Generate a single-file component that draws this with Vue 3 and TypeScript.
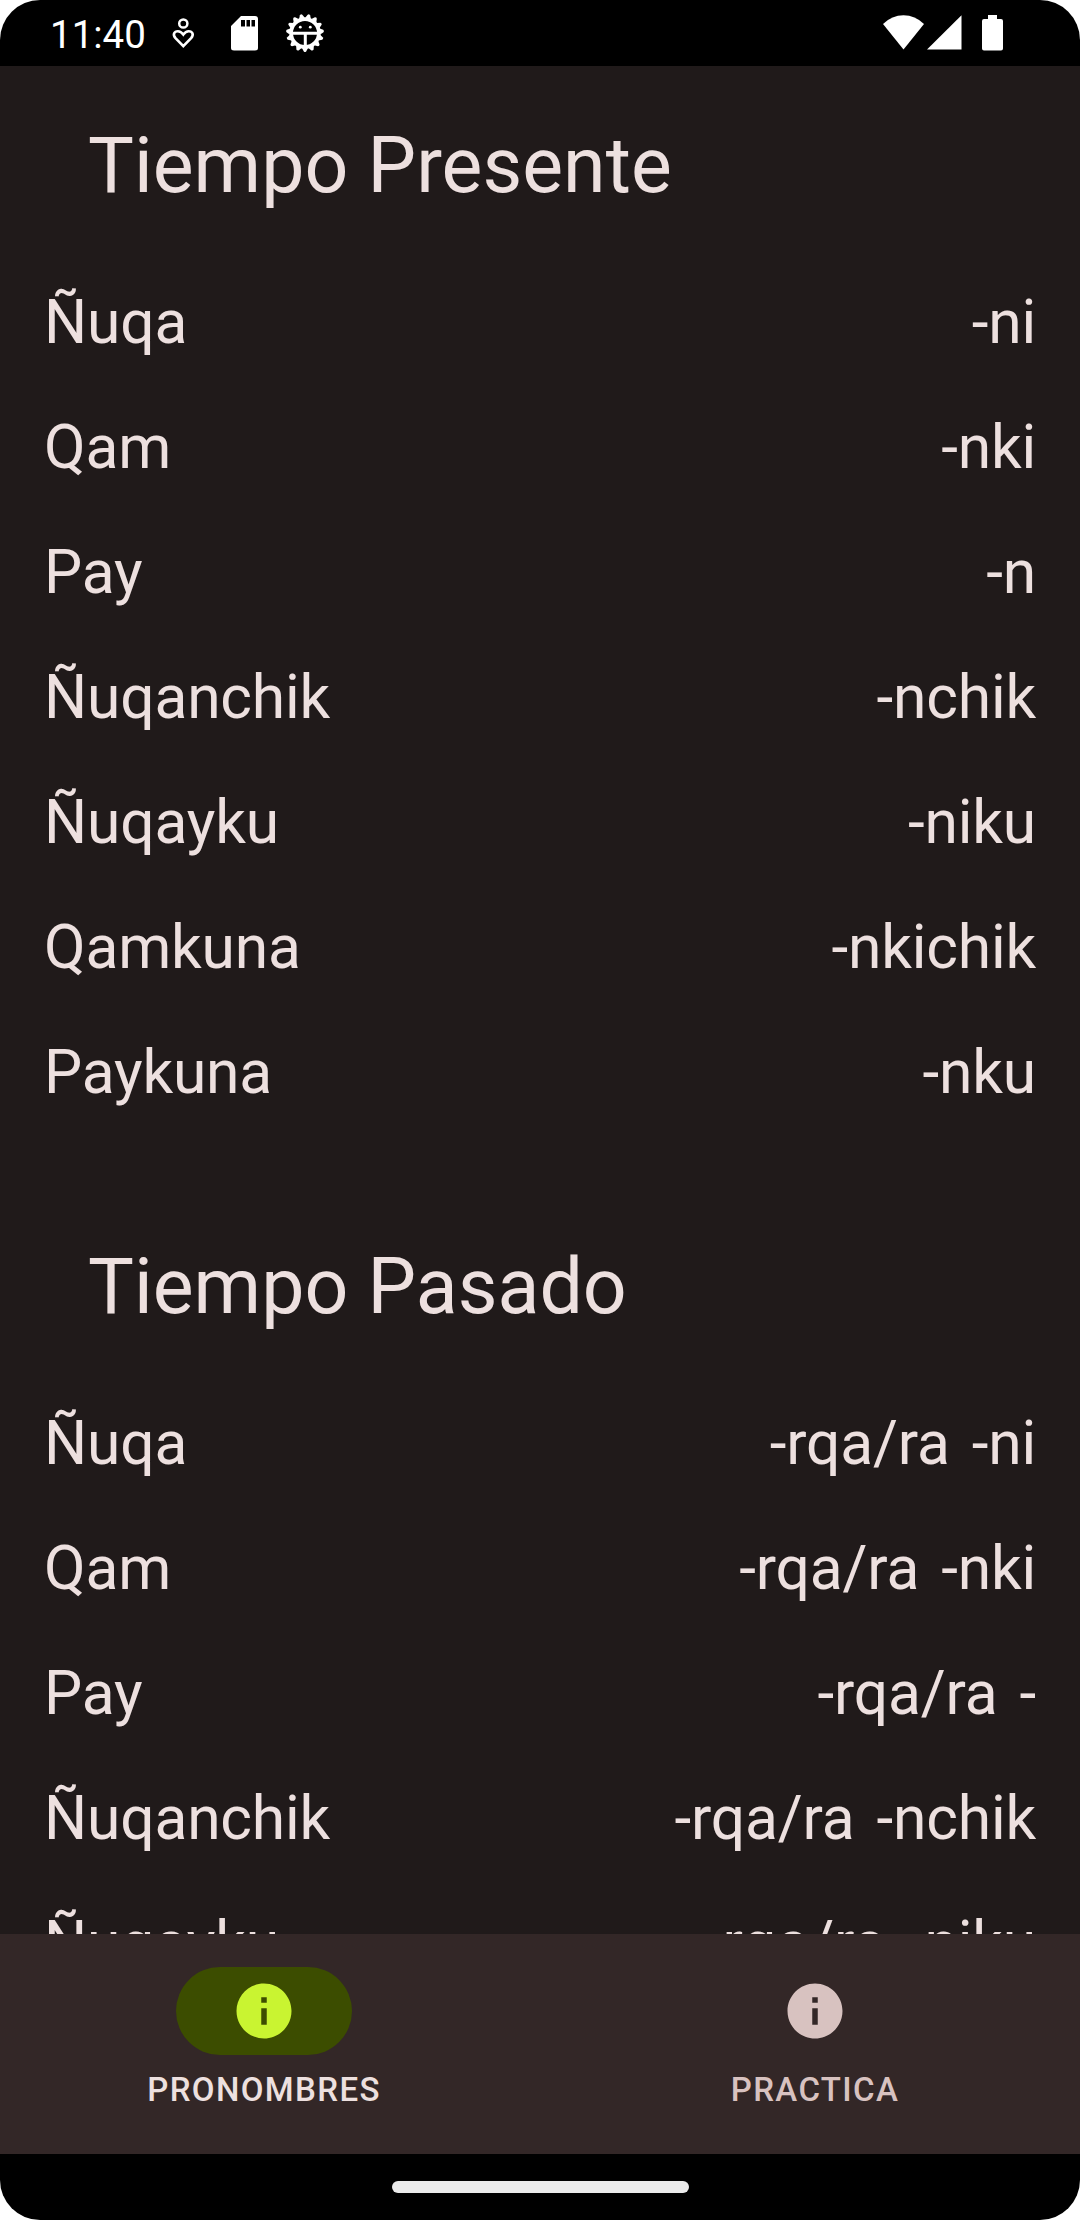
<script setup lang="ts">
interface Row {
  pronoun: string
  suffixes: string[]
}

interface Section {
  title: string
  rows: Row[]
}

const sections: Section[] = [
  {
    title: 'Tiempo Presente',
    rows: [
      { pronoun: 'Ñuqa', suffixes: ['-ni'] },
      { pronoun: 'Qam', suffixes: ['-nki'] },
      { pronoun: 'Pay', suffixes: ['-n'] },
      { pronoun: 'Ñuqanchik', suffixes: ['-nchik'] },
      { pronoun: 'Ñuqayku', suffixes: ['-niku'] },
      { pronoun: 'Qamkuna', suffixes: ['-nkichik'] },
      { pronoun: 'Paykuna', suffixes: ['-nku'] },
    ],
  },
  {
    title: 'Tiempo Pasado',
    rows: [
      { pronoun: 'Ñuqa', suffixes: ['-rqa/ra', '-ni'] },
      { pronoun: 'Qam', suffixes: ['-rqa/ra', '-nki'] },
      { pronoun: 'Pay', suffixes: ['-rqa/ra', '-'] },
      { pronoun: 'Ñuqanchik', suffixes: ['-rqa/ra', '-nchik'] },
      { pronoun: 'Ñuqayku', suffixes: ['-rqa/ra', '-niku'] },
    ],
  },
]

const tabs = [
  { label: 'PRONOMBRES', active: true },
  { label: 'PRACTICA', active: false },
]

const teeth = Array.from({ length: 15 }, (_, i) => i * 24 + 12)
</script>

<template>
  <div class="screen">
    <header class="status">
      <span class="time">11:40</span>
      <svg class="heart" width="24" height="36" viewBox="0 0 24 36" fill="none" stroke="#fff">
        <circle cx="12.3" cy="8.5" r="4.1" stroke-width="2.5" />
        <path d="M12.300 31.200L4.500 23.200C1.300 19.600 3.300 16.200 6.900 16.200C9.300 16.200 10.900 17.600 12.300 19.600C13.700 17.600 15.300 16.200 17.700 16.200C21.300 16.200 23.300 19.600 20.100 23.200Z" stroke-width="2.600" />
      </svg>
      <svg class="card" width="27" height="35" viewBox="0 0 27 35">
        <path fill="#fff" fill-rule="evenodd" d="M10 0H24Q27 0 27 3V32Q27 34.5 24 34.5H3Q0 34.5 0 32V10ZM10 4V10.500H14V4ZM15.500 4V10.500H19V4ZM20.500 4V10.500H24V4Z" />
      </svg>
      <svg class="bug" width="40" height="40" viewBox="-20 -20 40 40">
        <circle r="13.900" fill="none" stroke="#fff" stroke-width="3.700" />
        <path v-for="a in teeth" :key="a" :transform="`rotate(${a})`" d="M-3 -15L-1.200 -18.500Q0 -19.600 1.200 -18.500L3 -15Z" fill="#fff" />
        <path d="M-13 0.300H13M0.300 0V14" stroke="#fff" stroke-width="3" fill="none" />
        <circle cx="-4.700" cy="-5.800" r="1.400" fill="#fff" />
        <circle cx="5.300" cy="-5.800" r="1.400" fill="#fff" />
      </svg>
      <span class="spacer"></span>
      <svg class="wifi" width="41" height="35" viewBox="0 0 41 35">
        <path d="M0 9Q9 0.300 20.500 0.300T41 9L20.500 34.500Z" fill="#fff" />
      </svg>
      <svg class="signal" width="35" height="35" viewBox="0 0 35 35">
        <path d="M0 34.600L34.500 0.300V34.600Z" fill="#fff" />
      </svg>
      <svg class="battery" width="21" height="36" viewBox="0 0 21 36">
        <path d="M6 0H15V4H19Q21 4 21 6V33.500Q21 35.500 19 35.500H2Q0 35.500 0 33.500V6Q0 4 2 4H6Z" fill="#fff" />
      </svg>
    </header>

    <main class="content">
      <section v-for="section in sections" :key="section.title" class="section">
        <h1 class="title">{{ section.title }}</h1>
        <div v-for="row in section.rows" :key="row.pronoun" class="row">
          <span>{{ row.pronoun }}</span>
          <div class="suffixes">
            <span v-for="suffix in row.suffixes" :key="suffix">{{ suffix }}</span>
          </div>
        </div>
      </section>
    </main>

    <nav class="tabs">
      <div v-for="tab in tabs" :key="tab.label" class="tab" :class="{ active: tab.active }">
        <div class="pill">
          <svg width="66" height="66" viewBox="0 0 24 24" fill="currentColor">
            <path d="M12 2C6.480 2 2 6.480 2 12s4.480 10 10 10 10-4.480 10-10S17.520 2 12 2zm1 15h-2v-6h2v6zm0-8h-2V7h2v2z" />
          </svg>
        </div>
        <span class="label">{{ tab.label }}</span>
      </div>
    </nav>

    <footer class="gesture"><div class="handle"></div></footer>
  </div>
</template>

<style>
body {
  margin: 0;
  background: #fff;
}
</style>

<style scoped>
.screen {
  display: flex;
  flex-direction: column;
  width: 1080px;
  height: 2220px;
  overflow: hidden;
  border-radius: 40px;
  background: #000;
  color: #ede0df;
  font-family: Roboto, sans-serif;
}

.status {
  display: flex;
  flex: none;
  align-items: flex-start;
  box-sizing: border-box;
  height: 66px;
  padding: 0 77px 0 50px;
  color: #fff;
}

.status svg {
  display: block;
  flex: none;
}

.time {
  width: 121px;
  padding-top: 12px;
  font-size: 38.5px;
  line-height: 45px;
}

.heart {
  margin-top: 15px;
}

.card {
  margin: 16px 0 0 36px;
}

.bug {
  margin: 13px 0 0 27px;
}

.spacer {
  flex: 1;
}

.wifi {
  margin-top: 15px;
}

.signal {
  margin: 15px 0 0 3px;
}

.battery {
  margin: 15px 0 0 20px;
}

.content {
  flex: 1;
  min-height: 0;
  overflow: hidden;
  background: #201a1a;
}

.section {
  padding-bottom: 52px;
}

.title {
  margin: 0;
  padding: 51px 88px 44px;
  font-size: 77px;
  font-weight: 400;
  line-height: 99px;
  letter-spacing: 0.04px;
}

.row {
  display: flex;
  justify-content: space-between;
  padding: 24px 44px;
  font-size: 60.5px;
  line-height: 77px;
  letter-spacing: -0.17px;
}

.suffixes {
  display: flex;
  gap: 22px;
}

.tabs {
  display: flex;
  flex: none;
  gap: 23px;
  height: 220px;
  background: #332727;
}

.tab {
  display: flex;
  flex: none;
  flex-direction: column;
  align-items: center;
  width: 528px;
  padding-top: 33px;
  color: #d8c2c0;
}

.pill {
  display: flex;
  align-items: center;
  justify-content: center;
  width: 176px;
  height: 88px;
  border-radius: 44px;
}

.active .pill {
  background: #3c4d00;
  color: #c9f431;
}

.active .label {
  color: #ede0df;
}

.label {
  margin-top: 13px;
  font-size: 33px;
  font-weight: 500;
  line-height: 44px;
  letter-spacing: 1.375px;
}

.gesture {
  display: flex;
  flex: none;
  justify-content: center;
  height: 66px;
}

.handle {
  width: 297px;
  height: 12px;
  margin-top: 27px;
  border-radius: 6px;
  background: #ebebeb;
}
</style>
